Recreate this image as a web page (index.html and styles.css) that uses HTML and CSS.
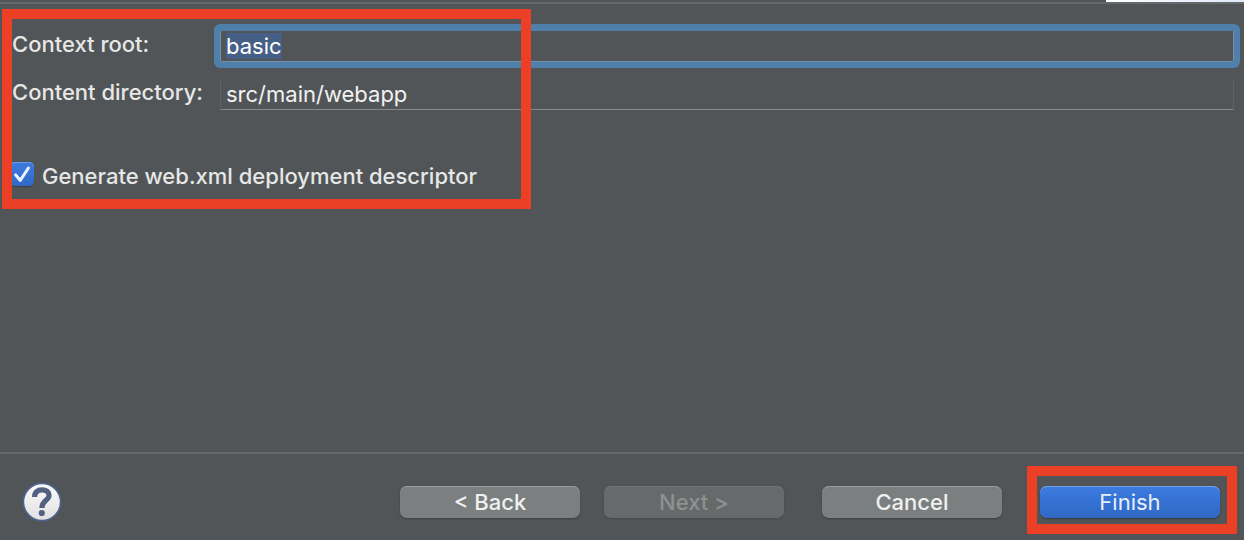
FILE: index.html
```html
<!DOCTYPE html>
<html lang="en">
<head>
<meta charset="utf-8">
<title>New Dynamic Web Project</title>
<link rel="stylesheet" href="styles.css">
</head>
<body>
<form class="wizard">
  <div class="top-edge"></div>
  <main class="content">
    <div class="fields">
      <label class="field-label" for="context-root">Context root:</label>
      <input class="field" id="context-root" type="text" value="basic" autocomplete="off" spellcheck="false">
      <label class="field-label" for="content-directory">Content directory:</label>
      <input class="field" id="content-directory" type="text" value="src/main/webapp" autocomplete="off" spellcheck="false">
    </div>
    <label class="option" for="generate">
      <span class="check">
        <input class="check-input" id="generate" type="checkbox" checked>
        <svg class="check-mark" viewBox="0 0 24 24" aria-hidden="true"><path d="M5.5 12.8 10.3 18.4 18.4 6"/></svg>
      </span>
      Generate web.xml deployment descriptor
    </label>
    <div class="highlight highlight-form"></div>
  </main>
  <footer class="footer">
    <button class="help" type="button" aria-label="Help">
      <svg class="help-icon" viewBox="0 0 40 40" aria-hidden="true">
        <defs><linearGradient id="disc" x1="0" y1="0" x2="0" y2="1"><stop offset="0" stop-color="#fcfcfc"/><stop offset="1" stop-color="#e0e0e0"/></linearGradient></defs>
        <circle cx="20" cy="20" r="18.6" fill="url(#disc)" stroke="#4b6390" stroke-width="1.6"/>
        <path d="M12.6 14.9C12.6 10.2 15.4 7.8 20 7.8C24.4 7.8 27 10 27 13.6C27 18.6 19.9 18.4 19.9 26" fill="none" stroke="#526180" stroke-width="5.2"/>
        <circle cx="19.8" cy="31" r="3.1" fill="#526180"/>
      </svg>
    </button>
    <div class="actions">
      <div class="pager">
        <button class="button" type="button">&lt; Back</button>
        <button class="button" type="button" disabled>Next &gt;</button>
      </div>
      <button class="button" type="button">Cancel</button>
      <div class="finish">
        <button class="button button-primary" type="button">Finish</button>
        <div class="highlight highlight-finish"></div>
      </div>
    </div>
  </footer>
</form>
<script src="script.js"></script>
</body>
</html>
```
FILE: styles.css
```css
* {
  box-sizing: border-box;
}

body {
  margin: 0;
  background: #515557;
  color: #e6e7e7;
  font-family: Inter, "Liberation Sans", sans-serif;
  font-size: 22px;
  font-weight: 500;
  line-height: 28px;
}

.wizard {
  display: flex;
  flex-direction: column;
  min-height: 100vh;
}

.top-edge {
  height: 4px;
  border-bottom: 2px solid #65696b;
  background: linear-gradient(90deg, #ffffff, #dfe8fb) right top / 138px 2px no-repeat;
}

.content {
  position: relative;
  flex: 1;
  padding: 26px 10px 24px 12px;
}

.fields {
  display: grid;
  grid-template-columns: 192px 1fr;
  gap: 16px;
}

.field-label {
  height: 28px;
  white-space: nowrap;
}

.field {
  width: 100%;
  height: 32px;
  padding: 1px 5px;
  border: 1px solid #5e6365;
  border-top-color: transparent;
  border-bottom-color: #85898b;
  background: transparent;
  color: #f2f2f2;
  font: inherit;
  font-weight: 400;
  outline: none;
}

.field:focus {
  border-radius: 2px;
  border-color: #7591a8;
  border-top-color: #4f80ab;
  box-shadow: 0 0 0 6px #4f80ab;
}

.field::selection {
  background: #465f87;
  color: #ffffff;
}

.option {
  display: inline-flex;
  align-items: flex-start;
  gap: 8px;
  margin: 52px 0 0 -2px;
}

.check {
  display: grid;
  width: 24px;
  height: 24px;
}

.check-input {
  grid-area: 1 / 1;
  width: 24px;
  height: 24px;
  margin: 0;
  border-radius: 5px;
  appearance: none;
}

.check-input:checked {
  background: linear-gradient(#3c7be0, #3169c6);
  box-shadow: inset 0 1px #659ae8, 0 1px 1px #3d4143;
}

.check-mark {
  grid-area: 1 / 1;
  z-index: 1;
  fill: none;
  stroke: #ecf2fc;
  stroke-width: 3;
  stroke-linecap: round;
  stroke-linejoin: round;
  pointer-events: none;
}

.highlight {
  position: absolute;
  z-index: 2;
  border: 10px solid #eb4026;
  pointer-events: none;
}

.highlight-form {
  top: 5px;
  left: 2px;
  width: 529px;
  height: 200px;
}

.highlight-finish {
  inset: -20px -17px -16px -13px;
}

.footer {
  display: flex;
  align-items: center;
  justify-content: space-between;
  padding: 28px 24px 18px 22px;
  border-top: 2px solid #65696b;
}

.help {
  display: block;
  width: 40px;
  height: 40px;
  padding: 0;
  border: 0;
  background: none;
}

.help-icon {
  display: block;
}

.actions {
  display: flex;
  gap: 38px;
}

.pager {
  display: flex;
  gap: 24px;
}

.finish {
  position: relative;
}

.button {
  display: block;
  width: 180px;
  height: 32px;
  padding: 0;
  border: 0;
  border-radius: 7px;
  background: #7c7f80;
  box-shadow: inset 0 1px #999c9d, 0 1px 2px #3b3f41;
  color: #f0f0f0;
  font: inherit;
}

.button:disabled {
  background: #666a6b;
  box-shadow: inset 0 1px #727677, 0 1px 2px #474b4d;
  color: #8e9192;
}

.button-primary {
  background: linear-gradient(#3c7be0, #3068c5);
  box-shadow: inset 0 1px #74a4ee, 0 1px 2px #35393b;
  color: #e6effd;
  font-weight: 400;
}
```
FILE: script.js
```js
const contextRoot = document.getElementById("context-root");
contextRoot.focus();
contextRoot.select();
```
